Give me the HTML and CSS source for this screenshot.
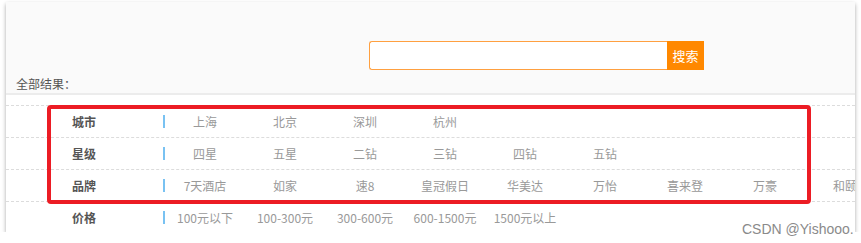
FILE: index.html
```html
<!DOCTYPE html>
<html lang="zh-CN">
<head>
    <meta charset="UTF-8">
    <title>酒店搜索</title>
    <link rel="stylesheet" href="styles.css">
</head>
<body>
    <div class="panel">
        <!-- 搜索区 -->
        <div class="search-area">
            <div class="search-bar">
                <input class="search-input" type="text">
                <button class="search-btn">搜索</button>
            </div>
            <div class="result-title">全部结果：</div>
        </div>

        <!-- 筛选条件 -->
        <div class="filters">
            <div class="filter-row">
                <div class="filter-label">城市</div>
                <div class="filter-items">
                    <span>上海</span><span>北京</span><span>深圳</span><span>杭州</span>
                </div>
            </div>
            <div class="filter-row">
                <div class="filter-label">星级</div>
                <div class="filter-items">
                    <span>四星</span><span>五星</span><span>二钻</span><span>三钻</span><span>四钻</span><span>五钻</span>
                </div>
            </div>
            <div class="filter-row">
                <div class="filter-label">品牌</div>
                <div class="filter-items">
                    <span>7天酒店</span><span>如家</span><span>速8</span><span>皇冠假日</span><span>华美达</span><span>万怡</span><span>喜来登</span><span>万豪</span><span>和颐</span>
                </div>
            </div>
            <div class="filter-row">
                <div class="filter-label">价格</div>
                <div class="filter-items">
                    <span>100元以下</span><span>100-300元</span><span>300-600元</span><span>600-1500元</span><span>1500元以上</span>
                </div>
            </div>
        </div>
    </div>

    <!-- 截图标注 -->
    <div class="mark"></div>
    <div class="watermark">CSDN @Yishooo.</div>
</body>
</html>
```

FILE: styles.css
```css
body {
    margin: 0;
    background-color: #fff;
    font-family: "Noto Sans CJK SC", "Noto Sans", sans-serif;
    font-size: 12px;
    overflow: hidden;
}

.panel {
    width: 849px;
    height: 230px;
    margin: 2px 0 0 6px;
    background-color: #fff;
    box-shadow: 0 2px 4px rgba(0, 0, 0, 0.35);
    overflow: hidden;
}

.search-area {
    height: 93px;
    background-color: #fafafa;
    border-bottom: 2px solid #ececec;
    box-sizing: border-box;
    padding-top: 39px;
}

.search-bar {
    display: flex;
    margin-left: 363px;
    height: 29px;
}

.search-input {
    width: 298px;
    height: 29px;
    box-sizing: border-box;
    border: 1px solid #ffa040;
    border-right: none;
    border-radius: 3px 0 0 3px;
    background-color: #fff;
    outline: none;
    padding: 0;
}

.search-btn {
    width: 37px;
    height: 29px;
    border: none;
    padding: 0;
    background-color: #ff8800;
    color: #fff;
    font-family: inherit;
    font-size: 13px;
}

.result-title {
    margin: 6px 0 0 10px;
    line-height: 16px;
    color: #555;
}

.filters {
    padding-top: 10px;
}

.filter-row {
    display: flex;
    align-items: center;
    height: 32px;
    box-sizing: border-box;
}

.filter-row + .filter-row,
.filter-row:first-child {
    border-top: 1px dashed #dcdcdc;
}

.filter-label {
    flex: none;
    width: 91px;
    padding-left: 66px;
    font-weight: bold;
    color: #555;
}

.filter-items {
    flex: none;
    display: flex;
    align-items: center;
    border-left: 2px solid #79c2f2;
    height: 13px;
    line-height: 13px;
    white-space: nowrap;
}

.filter-items span {
    flex: none;
    width: 80px;
    text-align: center;
    color: #999;
}

.mark {
    position: absolute;
    left: 47px;
    top: 105px;
    width: 764px;
    height: 99px;
    box-sizing: border-box;
    border: 4px solid #ec1c24;
    border-radius: 4px;
}

.watermark {
    position: absolute;
    left: 742px;
    top: 221px;
    font-family: "Liberation Sans", sans-serif;
    font-size: 14px;
    color: #8a8a8a;
}
```
